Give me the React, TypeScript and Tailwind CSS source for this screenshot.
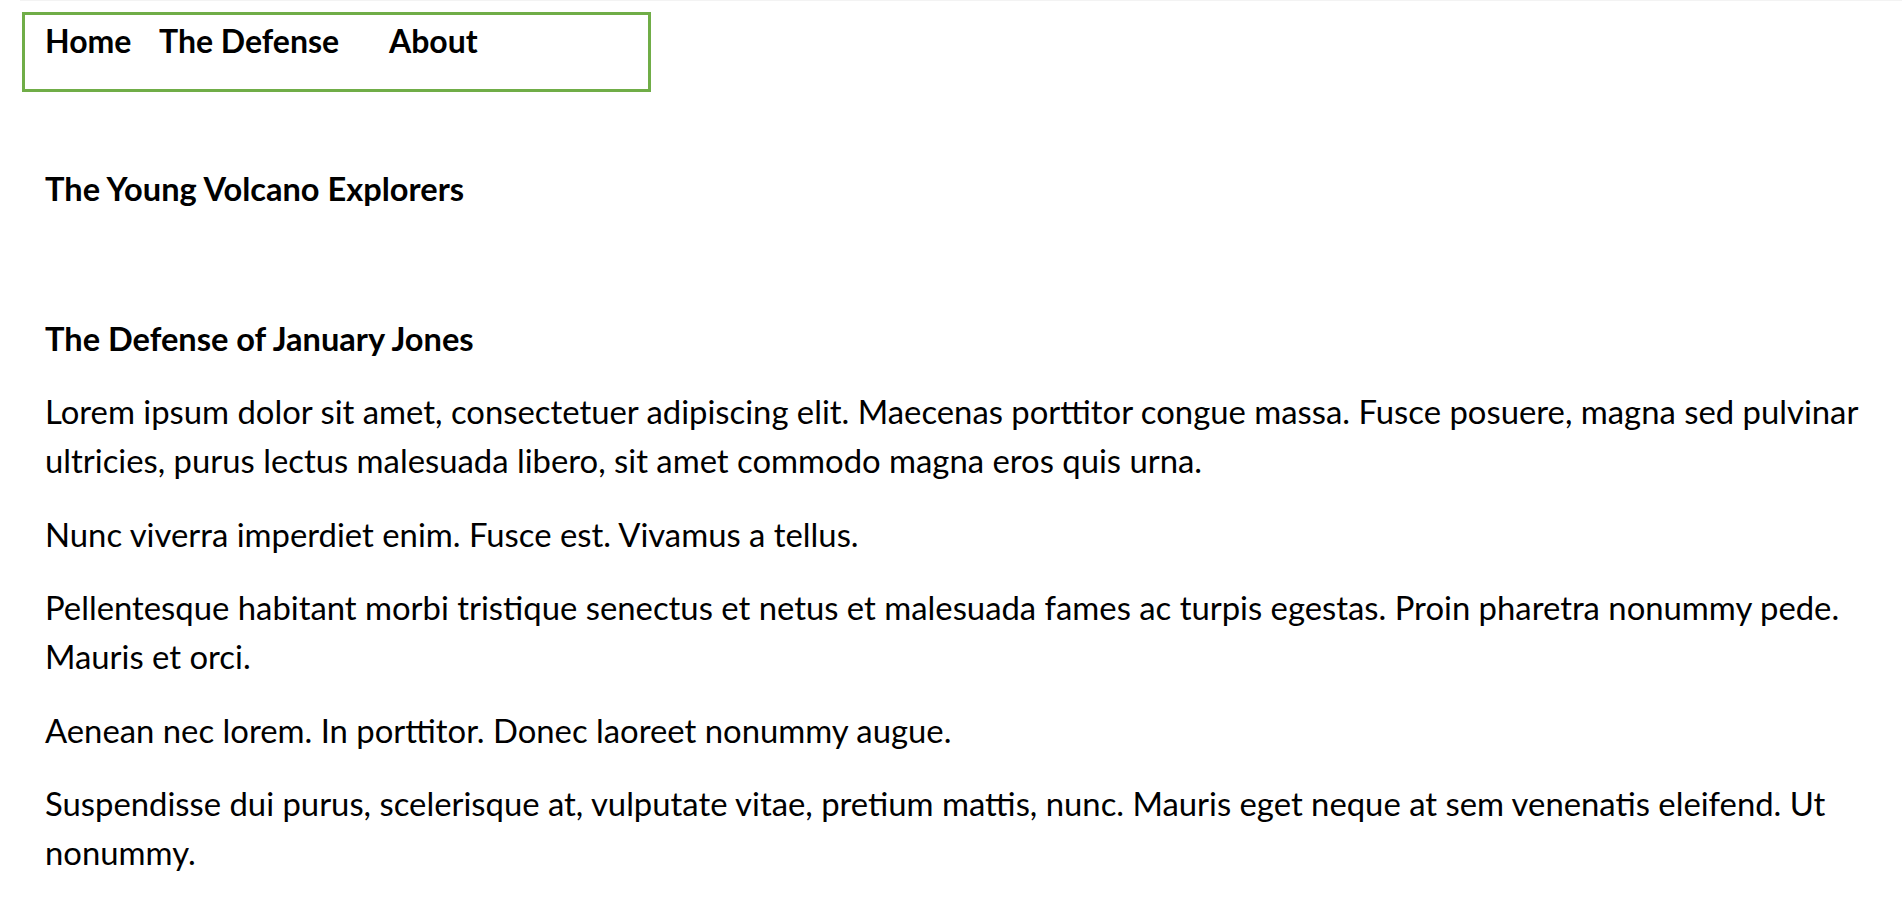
import React from "react";

const paragraphs = [
  "Lorem ipsum dolor sit amet, consectetuer adipiscing elit. Maecenas porttitor congue massa. Fusce posuere, magna sed pulvinar ultricies, purus lectus malesuada libero, sit amet commodo magna eros quis urna.",
  "Nunc viverra imperdiet enim. Fusce est. Vivamus a tellus.",
  "Pellentesque habitant morbi tristique senectus et netus et malesuada fames ac turpis egestas. Proin pharetra nonummy pede. Mauris et orci.",
  "Aenean nec lorem. In porttitor. Donec laoreet nonummy augue.",
  "Suspendisse dui purus, scelerisque at, vulputate vitae, pretium mattis, nunc. Mauris eget neque at sem venenatis eleifend. Ut nonummy.",
];

export default function App() {
  return (
    <div className="min-h-screen bg-white text-black font-['Lato',_'Open_Sans',_sans-serif]">
      <div className="ml-[20px] h-px bg-[#f3f3f3]" />
      <div className="px-[22px] pt-[11px]">
        <nav className="h-[80px] w-[629px] border-[3px] border-[#70ad47] pl-[20px] pt-[6px]">
          <ul className="flex text-[32px] font-bold leading-[40px]">
            <li className="w-[114px]">
              <a href="#">Home</a>
            </li>
            <li className="w-[230px]">
              <a href="#">The Defense</a>
            </li>
            <li>
              <a href="#">About</a>
            </li>
          </ul>
        </nav>
      </div>
      <main className="pl-[45px] pr-[20px] pt-[72px]">
        <h1 className="text-[32.6px] font-bold leading-[49.6px]">The Young Volcano Explorers</h1>
        <h2 className="mt-[100px] text-[32.6px] font-bold leading-[49.6px]">The Defense of January Jones</h2>
        {paragraphs.map((p) => (
          <p key={p} className="mt-[23.6px] text-[32.85px] leading-[49.6px]">
            {p}
          </p>
        ))}
      </main>
    </div>
  );
}
